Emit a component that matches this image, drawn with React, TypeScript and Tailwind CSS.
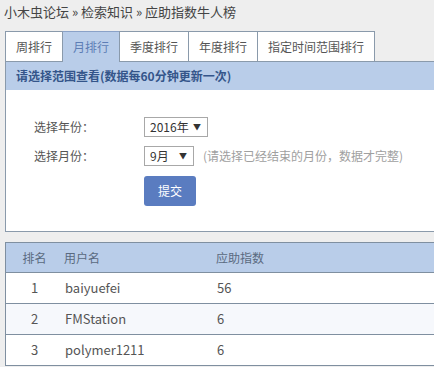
const tabs = ["周排行", "月排行", "季度排行", "年度排行", "指定时间范围排行"];

const rows = [
  { rank: 1, name: "baiyuefei", score: 56 },
  { rank: 2, name: "FMStation", score: 6 },
  { rank: 3, name: "polymer1211", score: 6 },
];

const App = () => {
  return (
    <div className="min-h-screen w-full overflow-hidden bg-[#eeeeee] font-['Noto_Sans_CJK_SC','Noto_Sans',sans-serif] text-[#444]">
      <div className="h-[31px] pl-[4px] pt-[3px] text-[13px] leading-[18px] whitespace-nowrap">
        小木虫论坛 » 检索知识 » 应助指数牛人榜
      </div>

      <div className="ml-[5px]">
        <div className="flex h-[31px] text-[12px]">
          {tabs.map((t, i) => (
            <div
              key={t}
              className={
                i === 1
                  ? "flex items-center px-[10px] border-l border-t border-t-[#8aa2c8] border-l-[#8a9aab] bg-[#b9cde9] text-[#5d7db5]"
                  : i === tabs.length - 1
                  ? "flex items-center px-[10px] border-l border-t border-r border-[#8a9aab] border-b bg-white text-[#555]"
                  : "flex items-center px-[10px] border-l border-t border-[#8a9aab] border-b bg-white text-[#555]"
              }
            >
              {t}
            </div>
          ))}
          <div className="flex-1 border-b border-[#8a9aab]" />
        </div>

        <div className="border-l border-b border-[#8a9aab] bg-white">
          <div className="flex h-[28px] items-center bg-[#b9cde9] pl-[10px] text-[12px] font-bold text-[#34558a] whitespace-nowrap">
            请选择范围查看(数据每60分钟更新一次)
          </div>
          <div className="flex flex-col gap-[9px] pl-[28px] pt-[27px] pb-[25px] text-[12px] text-[#555]">
            <div className="flex h-[20px] items-center">
              <div className="w-[110px]">选择年份：</div>
              <div className="flex h-[20px] w-[64px] items-center justify-between border border-[#a8a8a8] bg-white pl-[5px] pr-[6px] text-[#333]">
                <span>2016年</span>
                <span className="text-[8px]">▼</span>
              </div>
            </div>
            <div className="flex h-[20px] items-center">
              <div className="w-[110px]">选择月份：</div>
              <div className="flex h-[20px] w-[50px] items-center justify-between border border-[#a8a8a8] bg-white pl-[5px] pr-[6px] text-[#333]">
                <span>9月</span>
                <span className="text-[8px]">▼</span>
              </div>
              <span className="ml-[9px] text-[#a0a0a0] whitespace-nowrap">
                (请选择已经结束的月份，数据才完整)
              </span>
            </div>
            <div className="flex pl-[110px] pt-[1px]">
              <button className="h-[30px] w-[52px] rounded-[3px] bg-[#5a7cc0] text-[12px] text-white">
                提交
              </button>
            </div>
          </div>
        </div>
      </div>

      <div className="ml-[5px] mt-[10px] border-l border-t border-[#7f8fa0] text-[13px]">
        <div className="grid h-[30px] grid-cols-[57px_152px_1fr] items-center border-b border-[#7f8fa0] bg-[#b9cde9] text-[12px] text-[#5a6a80]">
          <div className="text-center">排名</div>
          <div className="pl-[1px]">用户名</div>
          <div className="pl-[1px]">应助指数</div>
        </div>
        {rows.map((r, i) => (
          <div
            key={r.rank}
            className={
              i % 2 === 1
                ? "grid h-[31px] grid-cols-[57px_152px_1fr] items-center border-b border-[#7f8fa0] bg-[#f6f8fc] text-[#555]"
                : "grid h-[31px] grid-cols-[57px_152px_1fr] items-center border-b border-[#7f8fa0] bg-white text-[#555]"
            }
          >
            <div className="text-center">{r.rank}</div>
            <div className="pl-[2px]">{r.name}</div>
            <div className="pl-[2px]">{r.score}</div>
          </div>
        ))}
      </div>
    </div>
  );
};

export default App;
